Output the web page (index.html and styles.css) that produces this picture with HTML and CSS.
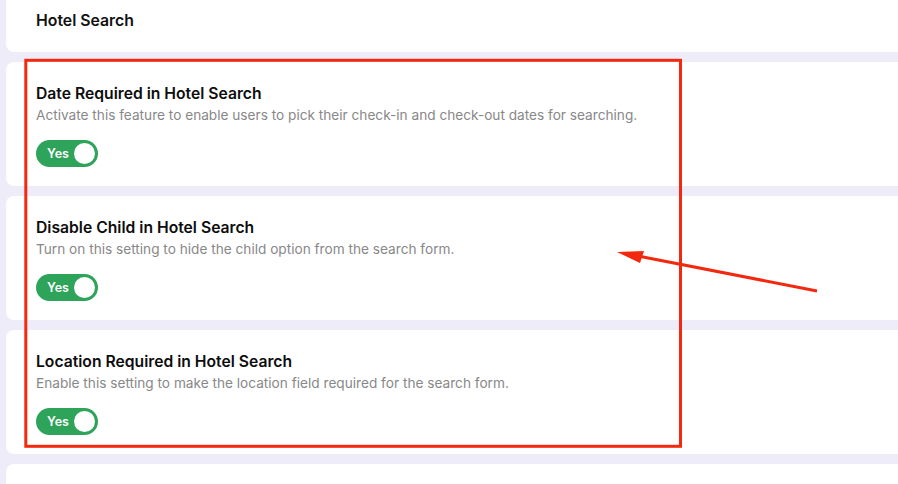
FILE: index.html
```html
<!DOCTYPE html>
<html lang="en">
<head>
<meta charset="utf-8">
<title>Hotel Search Settings</title>
<link rel="stylesheet" href="styles.css">
</head>
<body>
<div class="page">
  <div class="card header-card">
    <h2 class="section-title">Hotel Search</h2>
  </div>
  <div class="card setting">
    <h3 class="setting-title">Date Required in Hotel Search</h3>
    <p class="setting-desc">Activate this feature to enable users to pick their check-in and check-out dates for searching.</p>
    <div class="toggle"><span class="toggle-label">Yes</span><span class="knob"></span></div>
  </div>
  <div class="card setting">
    <h3 class="setting-title">Disable Child in Hotel Search</h3>
    <p class="setting-desc">Turn on this setting to hide the child option from the search form.</p>
    <div class="toggle"><span class="toggle-label">Yes</span><span class="knob"></span></div>
  </div>
  <div class="card setting">
    <h3 class="setting-title">Location Required in Hotel Search</h3>
    <p class="setting-desc">Enable this setting to make the location field required for the search form.</p>
    <div class="toggle"><span class="toggle-label">Yes</span><span class="knob"></span></div>
  </div>
  <div class="card tail-card"></div>
</div>
<svg class="annotation" width="898" height="484" viewBox="0 0 898 484" xmlns="http://www.w3.org/2000/svg">
  <rect x="25.8" y="60.3" width="654.7" height="386" fill="none" stroke="#f2290e" stroke-width="3"/>
  <line x1="817" y1="291" x2="638" y2="256" stroke="#f2290e" stroke-width="3"/>
  <polygon points="617,252 644,251 640,263" fill="#f2290e"/>
</svg>
</body>
</html>
```
FILE: styles.css
```css
* { box-sizing: border-box; }
html, body { margin: 0; padding: 0; }
body {
  background: #eeecf8;
  font-family: Inter, "Noto Sans", "Liberation Sans", sans-serif;
  width: 898px;
  height: 484px;
  overflow: hidden;
  position: relative;
}
.page {
  display: flex;
  flex-direction: column;
  gap: 10px;
  padding-left: 6px;
}
.card {
  background: #ffffff;
  border-radius: 8px 0 0 8px;
}
.header-card {
  height: 52px;
  border-radius: 0 0 0 8px;
  padding: 11px 30px 0;
}
.section-title {
  margin: 0;
  font-size: 15.8px;
  font-weight: 600;
  line-height: 20px;
  color: #111111;
}
.setting {
  height: 124px;
  padding: 22px 30px 19px;
  flex-shrink: 0;
}
.tail-card {
  height: 40px;
  flex-shrink: 0;
  border-radius: 8px 0 0 0;
}
.setting-title {
  margin: 0;
  font-size: 15.7px;
  font-weight: 600;
  line-height: 20px;
  color: #0d0d0d;
}
.setting-desc {
  margin: 2px 0 0;
  font-size: 13.65px;
  line-height: 18px;
  color: #888888;
}
.toggle {
  margin-top: 16px;
  width: 62px;
  height: 27px;
  border-radius: 14px;
  background: #2ea35a;
  display: flex;
  align-items: center;
  padding: 0 3px 0 11px;
  justify-content: space-between;
}
.toggle-label {
  color: #ffffff;
  font-size: 12.5px;
  font-weight: 600;
}
.knob {
  width: 21px;
  height: 21px;
  border-radius: 50%;
  background: #ffffff;
}
.annotation {
  position: absolute;
  left: 0;
  top: 0;
  pointer-events: none;
}
```
